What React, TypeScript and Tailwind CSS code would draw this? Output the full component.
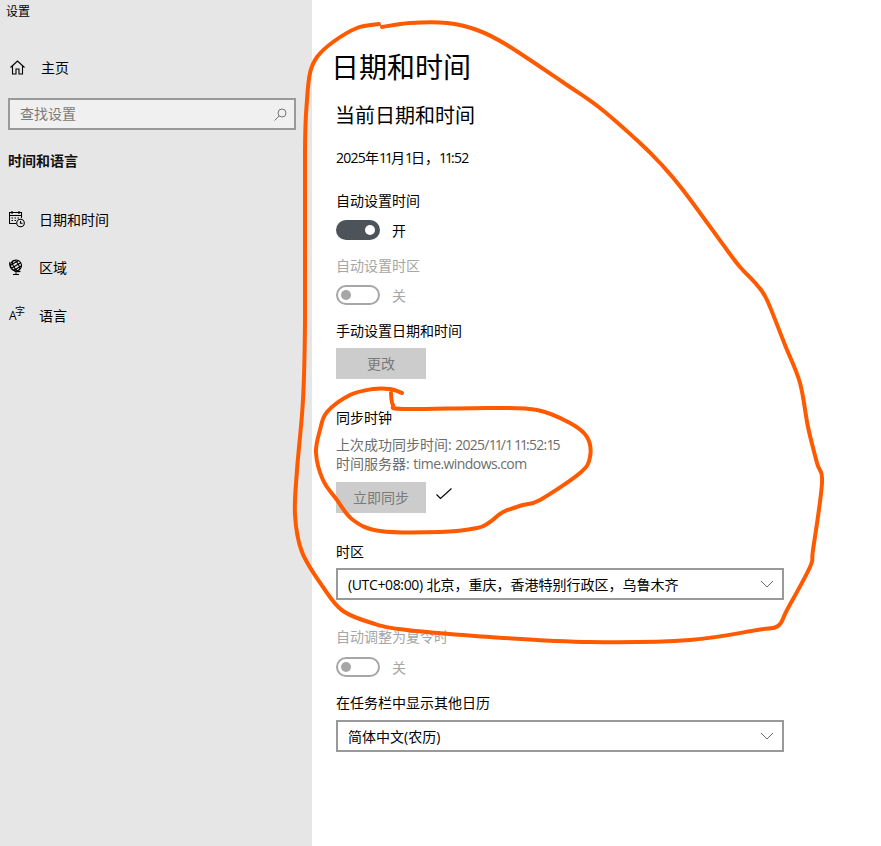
const F = "font-['Open_Sans','Noto_Sans_CJK_SC',sans-serif]";

function smooth(p: number[][]) {
  let d = `M${p[0][0]} ${p[0][1]}`;
  for (let i = 0; i < p.length - 1; i++) {
    const a = p[Math.max(i - 1, 0)], b = p[i], c = p[i + 1], e = p[Math.min(i + 2, p.length - 1)];
    d += ` C${b[0] + (c[0] - a[0]) / 6} ${b[1] + (c[1] - a[1]) / 6} ${c[0] - (e[0] - b[0]) / 6} ${c[1] - (e[1] - b[1]) / 6} ${c[0]} ${c[1]}`;
  }
  return d;
}

const stroke1 = [[379,24],[357,28],[333,42],[317,57],[310,73],[307,100],[305,150],[305,320],[303,400],[297,470],[295,515],[302,552],[323,587],[343,611],[375,624],[407,630],[490,637],[590,642],[690,640],[757,630],[778,626],[787,610],[810,567],[813,550],[822,483],[817,463],[808,427],[800,383],[785,345],[767,300],[757,285],[740,267],[727,250],[683,190],[660,163],[640,143],[600,108],[567,85],[507,45],[477,30],[447,23],[410,23],[382,27]];
const stroke2 = [[402,393],[390,389],[373,389],[350,395],[327,412],[320,430],[316,453],[323,480],[337,500],[353,520],[380,531],[440,532],[477,528],[490,522],[503,512],[523,505],[540,500],[580,473],[590,457],[587,437],[570,423],[537,410],[490,408],[403,409],[393,405],[391,393]];

function Num({ s }: { s: string }) {
  return (
    <>
      {s.split(/(1+)/).filter(Boolean).map((part, i) =>
        part[0] === "1" ? (
          <span key={i} className="tracking-[-2px]">{part}</span>
        ) : (
          <span key={i} className="tracking-[-0.75px]">{part}</span>
        )
      )}
    </>
  );
}

function Chevron() {
  return (
    <svg width="14" height="8" viewBox="0 0 14 8" fill="none" stroke="#666" strokeWidth="1"><path d="M1 1l6 6 6-6" /></svg>
  );
}

function Select({ children }: { children: React.ReactNode }) {
  return (
    <div className="flex items-center justify-between w-[448px] h-[32px] border-2 border-[#999] pl-[10px] pr-[8px] text-[14px] text-black">
      <span>{children}</span>
      <Chevron />
    </div>
  );
}

function Toggle({ on, label }: { on: boolean; label: string }) {
  return on ? (
    <div className="flex items-center h-[20px]">
      <div className="flex items-center justify-end w-[44px] h-[20px] rounded-full bg-[#4c5359] pr-[5px]">
        <div className="w-[10px] h-[10px] rounded-full bg-white" />
      </div>
      <span className="ml-[12px] text-[14px] text-black">{label}</span>
    </div>
  ) : (
    <div className="flex items-center h-[20px]">
      <div className="flex items-center w-[44px] h-[20px] rounded-full border-2 border-[#a6a6a6] pl-[3px]">
        <div className="w-[10px] h-[10px] rounded-full bg-[#a6a6a6]" />
      </div>
      <span className="ml-[12px] text-[14px] text-[#a6a6a6]">{label}</span>
    </div>
  );
}

function Label({ children, className = "" }: { children: React.ReactNode; className?: string }) {
  return <div className={`h-[20px] leading-[20px] text-[14px] text-black ${className}`}>{children}</div>;
}

function Btn({ children, className = "" }: { children: React.ReactNode; className?: string }) {
  return <div className={`flex items-center justify-center w-[90px] h-[31px] bg-[#cccccc] text-[14px] text-[#7a7a7a] ${className}`}>{children}</div>;
}

function NavRow({ icon, text }: { icon: React.ReactNode; text: string }) {
  return (
    <div className="flex items-center h-[48px] pl-[8px] text-[14px] text-black">
      <div className="flex items-center justify-start w-[31px]">{icon}</div>
      <span>{text}</span>
    </div>
  );
}

const ico = { fill: "none", stroke: "#000", strokeWidth: 1.1 };

export default function App() {
  return (
    <div className={`relative flex w-[881px] h-[846px] overflow-hidden bg-white ${F}`}>
      <aside className="w-[312px] shrink-0 bg-[#e6e6e6]">
        <div className="pl-[6px] pt-[3px] h-[20px] leading-[17px] text-[12px] text-black">设置</div>
        <div className="flex items-center h-[48px] mt-[23px] pl-[10px] text-[14px] text-black">
          <svg width="15" height="15" viewBox="0 0 15 15" {...ico}>
            <path d="M.5 7.500l7-6.500 7 6.500M2.500 6v8h3.500V9h3v5h3.500V6" />
          </svg>
          <span className="ml-[16px]">主页</span>
        </div>
        <div className="flex items-center justify-between w-[288px] ml-[8px] h-[32px] mt-[7px] border-2 border-[#999] bg-[#f0f0f0] pl-[10px] pr-[7px] text-[14px] text-[#7a7a7a]">
          <span className="pb-[2px]">查找设置</span>
          <svg width="13" height="13" viewBox="0 0 13 13" fill="none" stroke="#777" strokeWidth="1">
            <circle cx="8" cy="5" r="4" /><path d="M5 8l-4.500 4.500" />
          </svg>
        </div>
        <div className="pl-[8px] mt-[21px] h-[20px] leading-[20px] text-[14px] font-bold text-[#111]">时间和语言</div>
        <div className="mt-[24px]">
          <NavRow text="日期和时间" icon={
            <svg className="ml-[1px]" width="16" height="17" viewBox="0 0 16 17" {...ico}>
              <path d="M7 12.500H.5V1.500h12V7M.5 4.500h12M3 0v3M10 0v3" />
              <path d="M2.500 7h1.500M5.500 7h1.500M8.500 7h1.500M2.500 9.500h1.500M5.500 9.500h1.500" />
              <circle cx="11.500" cy="12" r="3.800" /><path d="M11.500 10v2.300h2" />
            </svg>
          } />
          <NavRow text="区域" icon={
            <svg className="ml-[1px]" width="15" height="17" viewBox="0 0 15 17" {...ico}>
              <g transform="rotate(-30 7 6.500)">
                <circle cx="7" cy="6.500" r="5.500" />
                <ellipse cx="7" cy="6.500" rx="2.600" ry="5.500" />
                <path d="M1.500 6.500h11M2.300 3.500h9.400M2.300 9.500h9.400" />
              </g>
              <path d="M1 3c-1.500 5 3 10.500 10.500 9.500M7 13v2.500M4 15.500h6" />
            </svg>
          } />
          <NavRow text="语言" icon={
            <span className="relative block w-[16px] h-[16px] text-black">
              <span className="absolute left-[1px] top-[2px] text-[12px] leading-[14px]">A</span>
              <span className="absolute left-[7px] -top-[1px] text-[10px] leading-[10px]">字</span>
            </span>
          } />
        </div>
      </aside>
      <main className="flex-1 pl-[24px] pt-[47px]">
        <div className="-ml-[5px] h-[40px] leading-[40px] text-[28px] text-black">日期和时间</div>
        <div className="-ml-[1px] mt-[15px] h-[28px] leading-[28px] text-[20px] text-black">当前日期和时间</div>
        <Label className="mt-[18px]"><Num s="2025" />年<Num s="11" />月<Num s="1" />日，<Num s="11:52" /></Label>
        <Label className="mt-[23px]">自动设置时间</Label>
        <div className="mt-[9px]"><Toggle on label="开" /></div>
        <Label className="mt-[16px] !text-[#a6a6a6]">自动设置时区</Label>
        <div className="mt-[9px]"><Toggle on={false} label="关" /></div>
        <Label className="mt-[16px]">手动设置日期和时间</Label>
        <Btn className="mt-[7px]">更改</Btn>
        <Label className="mt-[29px]">同步时钟</Label>
        <div className="mt-[7px] text-[14px] leading-[19px] text-[#6d6d6d]">
          <div>上次成功同步时间: <Num s="2025/11/1 11:52:15" /></div>
          <div>时间服务器: <span className="tracking-[-0.56px]">time.windows.com</span></div>
        </div>
        <div className="flex items-start mt-[9px]">
          <Btn>立即同步</Btn>
          <svg className="ml-[10px] mt-[6px]" width="16" height="12" viewBox="0 0 16 12" fill="none" stroke="#000" strokeWidth="1.1"><path d="M.5 6.500l4 4L15.500 .5" /></svg>
        </div>
        <Label className="mt-[29px]">时区</Label>
        <div className="mt-[6px]"><Select><span className="tracking-[-0.36px]">(UTC+08:00)</span> 北京，重庆，香港特别行政区，乌鲁木齐</Select></div>
        <Label className="mt-[27px] !text-[#a6a6a6]">自动调整为夏令时</Label>
        <div className="mt-[10px]"><Toggle on={false} label="关" /></div>
        <Label className="mt-[16px]">在任务栏中显示其他日历</Label>
        <div className="mt-[7px]"><Select>简体中文(农历)</Select></div>
      </main>
      <svg className="absolute left-0 top-0 pointer-events-none" width="881" height="846" fill="none" stroke="#ff5a00" strokeWidth="4" strokeLinecap="round" strokeLinejoin="round">
        <path d={smooth(stroke1)} />
        <path d={smooth(stroke2)} />
      </svg>
    </div>
  );
}
